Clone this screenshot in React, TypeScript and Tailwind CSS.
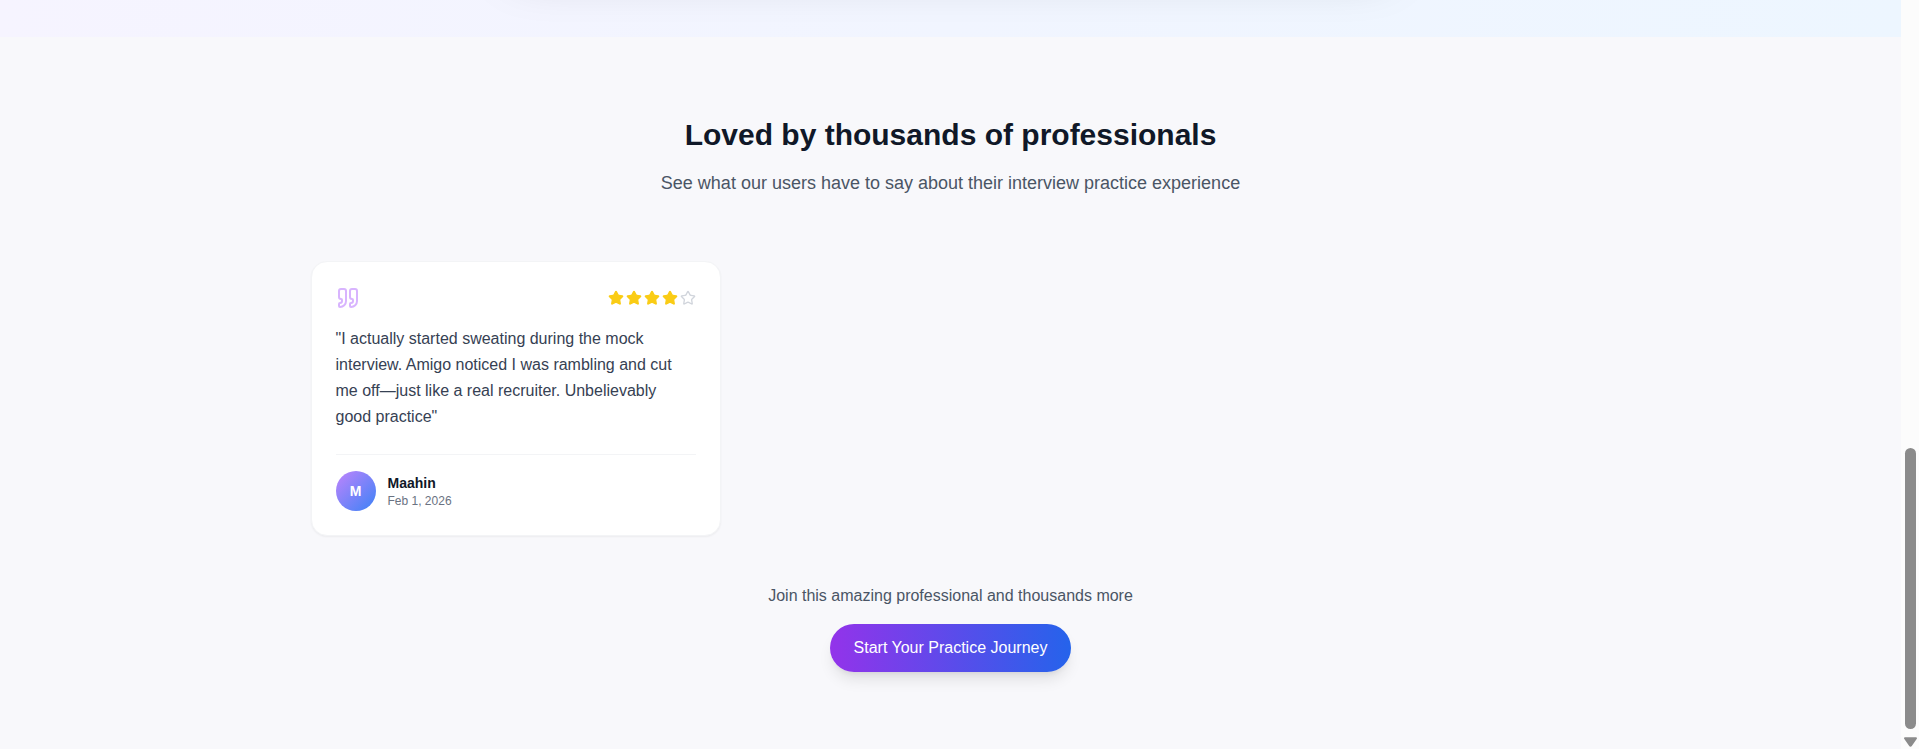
import { Quote, Star } from "lucide-react";

type Testimonial = {
  name: string;
  date: string;
  rating: number;
  text: string;
};

const testimonials: Testimonial[] = [
  {
    name: "Maahin",
    date: "Feb 1, 2026",
    rating: 4,
    text: "I actually started sweating during the mock interview. Amigo noticed I was rambling and cut me off—just like a real recruiter. Unbelievably good practice",
  },
];

function Rating(props: { value: number }) {
  return (
    <div
      className="flex gap-0.5"
      role="img"
      aria-label={`${props.value} out of 5 stars`}
    >
      {[1, 2, 3, 4, 5].map((n) => (
        <Star
          key={n}
          className={
            n <= props.value
              ? "h-4 w-4 fill-[#facc15] text-[#facc15]"
              : "h-4 w-4 text-gray-300"
          }
        />
      ))}
    </div>
  );
}

function TestimonialCard(props: Testimonial) {
  return (
    <article className="rounded-2xl border border-gray-100 bg-white p-6 shadow-xs">
      <div className="mb-4 flex items-center justify-between">
        <Quote className="h-6 w-6 text-[#d8b4fe]" />
        <Rating value={props.rating} />
      </div>

      <p className="mb-6 leading-[26px] text-gray-700">{`"${props.text}"`}</p>

      {/* Author */}
      <div className="flex items-center gap-3 border-t border-gray-100 pt-4">
        <div className="flex h-10 w-10 items-center justify-center rounded-full bg-linear-to-br/srgb from-[#c084fc] to-[#3b82f6] text-sm font-bold text-white">
          {props.name[0]}
        </div>
        <div>
          <p className="text-sm font-semibold text-gray-900">{props.name}</p>
          <p className="text-xs text-gray-500">{props.date}</p>
        </div>
      </div>
    </article>
  );
}

function ScrollRail() {
  return (
    <div
      aria-hidden="true"
      className="flex w-[18px] shrink-0 flex-col items-center justify-end gap-2 bg-[#fcfcfc] pb-[2px]"
    >
      <div className="h-[281px] w-[11px] rounded-full bg-[#8b8b8b]" />
      <svg width="13" height="10" viewBox="0 0 12 9" fill="#8b8b8b">
        <path d="M1.2 0h9.6c1 0 1.5 1 .9 1.8L7.2 8.2c-.6.8-1.8.8-2.4 0L.3 1.8C-.3 1 .2 0 1.2 0z" />
      </svg>
    </div>
  );
}

export default function App() {
  return (
    <div className="flex h-screen overflow-hidden bg-[#f8f8fb] font-['Liberation_Sans',Arial,sans-serif]">
      <main className="min-w-0 flex-1">
        {/* Tail end of the previous section, with the shadow of its card */}
        <div className="flex h-[37px] flex-col justify-end overflow-hidden">
          <div className="shrink-0 bg-linear-to-r/srgb from-[#f6f4ff] via-[#f1f5ff] to-[#edf6ff] pb-20">
            <div className="mx-auto h-96 max-w-4xl rounded-3xl bg-white shadow-2xl" />
          </div>
        </div>

        <section className="px-8 py-20">
          <div className="mx-auto max-w-7xl">
            <div className="mb-16 text-center">
              <h2 className="mb-4 text-3xl font-bold text-gray-900">
                Loved by thousands of professionals
              </h2>
              <p className="text-lg text-gray-600">
                See what our users have to say about their interview practice
                experience
              </p>
            </div>

            <div className="grid gap-6 md:grid-cols-2 lg:grid-cols-3">
              {testimonials.map((item) => (
                <TestimonialCard key={item.name} {...item} />
              ))}
            </div>

            <div className="mt-12 text-center">
              <p className="mb-4 text-gray-600">
                Join this amazing professional and thousands more
              </p>
              <button className="rounded-full bg-linear-to-r/srgb from-[#9333ea] to-[#2563eb] px-6 py-3 text-white shadow-lg">
                Start Your Practice Journey
              </button>
            </div>
          </div>
        </section>
      </main>
      <ScrollRail />
    </div>
  );
}
